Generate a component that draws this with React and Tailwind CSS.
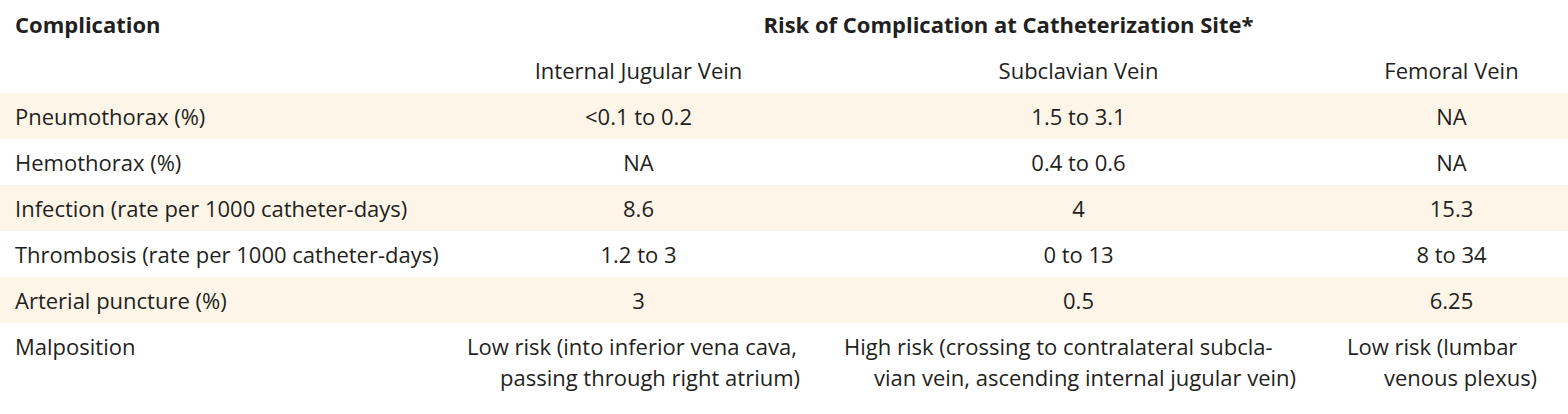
const rows = [
  { label: "Pneumothorax (%)", ijv: "<0.1 to 0.2", sub: "1.5 to 3.1", fem: "NA" },
  { label: "Hemothorax (%)", ijv: "NA", sub: "0.4 to 0.6", fem: "NA" },
  { label: "Infection (rate per 1000 catheter-days)", ijv: "8.6", sub: "4", fem: "15.3" },
  { label: "Thrombosis (rate per 1000 catheter-days)", ijv: "1.2 to 3", sub: "0 to 13", fem: "8 to 34" },
  { label: "Arterial puncture (%)", ijv: "3", sub: "0.5", fem: "6.25" },
];

const grid = "grid grid-cols-[455px_375px_505px_233px]";

export default function App() {
  return (
    <div
      className="w-[1568px] h-[414px] bg-white text-[#231f20] text-[22px] leading-[31px]"
      style={{ fontFamily: '"Open Sans", "Liberation Sans", sans-serif' }}
    >
      {/* Header */}
      <div className={`${grid} h-[48px] items-center font-bold`}>
        <div className="pl-[15px]">Complication</div>
        <div className="col-span-3 text-center pr-[6px]">
          Risk of Complication at Catheterization Site*
        </div>
      </div>
      <div className={`${grid} h-[45px] items-center`}>
        <div />
        <div className="text-center pr-[8px]">Internal Jugular Vein</div>
        <div className="text-center pr-[8px]">Subclavian Vein</div>
        <div className="text-center">Femoral Vein</div>
      </div>

      {/* Body */}
      {rows.map((row, i) => (
        <div
          key={row.label}
          className={`${grid} h-[46px] items-center ${i % 2 === 0 ? "bg-[#fdf5e8]" : "bg-white"}`}
        >
          <div className="pl-[15px] whitespace-nowrap">{row.label}</div>
          <div className="text-center pr-[8px]">{row.ijv}</div>
          <div className="text-center pr-[8px]">{row.sub}</div>
          <div className="text-center">{row.fem}</div>
        </div>
      ))}

      {/* Malposition */}
      <div className={`${grid} pt-[8px]`}>
        <div className="pl-[15px]">Malposition</div>
        <div className="pl-[45px] -indent-[33px] whitespace-nowrap">
          Low risk (into inferior vena cava,
          <br />
          passing through right atrium)
        </div>
        <div className="pl-[44px] -indent-[30px] whitespace-nowrap">
          High risk (crossing to contralateral subcla-
          <br />
          vian vein, ascending internal jugular vein)
        </div>
        <div className="pl-[49px] -indent-[37px] whitespace-nowrap">
          Low risk (lumbar
          <br />
          venous plexus)
        </div>
      </div>
    </div>
  );
}
